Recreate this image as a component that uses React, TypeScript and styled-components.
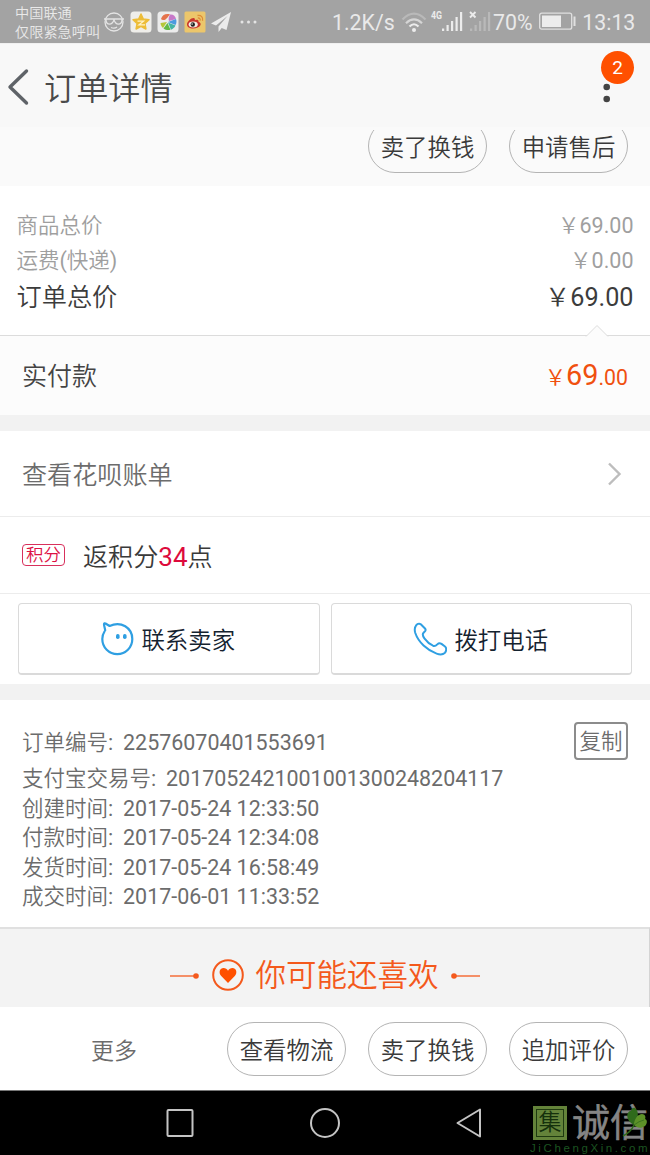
import React from 'react';
import styled, { createGlobalStyle } from 'styled-components';

const GlobalStyle = createGlobalStyle`
  * { box-sizing: border-box; }
  body {
    margin: 0;
    background: #fff;
    font-family: Roboto, "Noto Sans CJK SC DemiLight", "Noto Sans CJK SC", sans-serif;
    font-weight: 400;
    color: #444;
  }
  button { font-family: inherit; padding: 0; margin: 0; }
`;

const Screen = styled.div`
  width: 650px;
  height: 1155px;
  display: flex;
  flex-direction: column;
  overflow: hidden;
  background: #fff;
`;

const StatusBar = styled.div`
  height: 43px;
  flex: none;
  display: flex;
  justify-content: space-between;
  padding: 0 15px;
  background: #a3a3a3;
  color: #e9e9e9;
`;

const StatusGroup = styled.div<{ $gap?: number }>`
  display: flex;
  align-items: center;
  gap: ${(p) => p.$gap ?? 0}px;
  height: 43px;
`;

const Carrier = styled.div`
  display: flex;
  flex-direction: column;
  font-size: 14.2px;
  line-height: 19px;
  width: 88px;
  padding-top: 3px;
  white-space: nowrap;
`;

const StatusText = styled.span<{ $width: number }>`
  width: ${(p) => p.$width}px;
  padding-top: 2px;
  font-size: 21.3px;
  line-height: 24px;
  white-space: nowrap;
`;

const Header = styled.header`
  height: 84px;
  flex: none;
  display: flex;
  align-items: center;
  padding: 3px 16px 0 7px;
  background: #f8f8f8;
  border-top: 1px solid #f0f0f0;
`;

const Title = styled.h1`
  flex: 1;
  margin: 0 0 0 15px;
  padding-top: 3px;
  font-size: 32.2px;
  font-weight: 400;
  line-height: 40px;
  color: #4a4a4a;
`;

const MenuButton = styled.div`
  position: relative;
  width: 54px;
  height: 60px;
`;

const Badge = styled.span`
  position: absolute;
  top: -6px;
  right: 0;
  width: 33px;
  height: 33px;
  border-radius: 50%;
  background: #ff5000;
  color: #fff;
  font-size: 19px;
  line-height: 33px;
  text-align: center;
`;

const ActionStrip = styled.div`
  height: 59px;
  flex: none;
  background: #fafafa;
  padding-top: 3px;
`;

const ActionClip = styled.div`
  display: flex;
  justify-content: flex-end;
  align-items: flex-end;
  gap: 22px;
  height: 43px;
  padding-right: 22px;
  overflow: hidden;
`;

const Pill = styled.button`
  flex: none;
  width: 119px;
  height: 54px;
  padding-top: 4px;
  border: 1px solid #b4b4b4;
  border-radius: 27px;
  background: transparent;
  color: #3a3a3a;
  font-size: 23.4px;
  line-height: 28px;
  white-space: nowrap;
`;

const Summary = styled.section`
  height: 149px;
  flex: none;
  padding: 22px 16.5px 0;
`;

const SummaryRow = styled.div<{ $strong?: boolean }>`
  display: flex;
  justify-content: space-between;
  align-items: center;
  height: ${(p) => (p.$strong ? 39 : 35)}px;
  font-size: ${(p) => (p.$strong ? 25.2 : 21.5)}px;
  line-height: 35px;
  color: ${(p) => (p.$strong ? '#3c3c3c' : '#9f9f9f')};
`;

const Paid = styled.section`
  position: relative;
  height: 80px;
  flex: none;
  display: flex;
  justify-content: space-between;
  align-items: center;
  padding: 0 22px;
  border-top: 1px solid #dcdcdc;
  background: #fcfcfc;
  font-size: 25px;
  line-height: 34px;
`;

const PaidLabel = styled.span`
  padding-top: 3px;
`;

const Notch = styled.svg`
  position: absolute;
  top: -12px;
  left: 585px;
`;

const Price = styled.span`
  padding-top: 2px;
  color: #f0500f;
  font-size: 21.3px;
  line-height: 34px;
  white-space: nowrap;
`;

const PriceWhole = styled.span`
  font-size: 28.8px;
`;

const Gap = styled.div<{ $height: number }>`
  flex: none;
  height: ${(p) => p.$height}px;
  background: #f2f2f2;
`;

const ListRow = styled.section<{ $height: number; $color: string }>`
  flex: none;
  display: flex;
  align-items: center;
  height: ${(p) => p.$height}px;
  padding: 0 28px 0 22px;
  border-bottom: 1px solid #ececec;
  font-size: 25.1px;
  line-height: 34px;
  color: ${(p) => p.$color};
`;

const RowText = styled.span`
  flex: 1;
  padding-top: 4px;
`;

const PointsTag = styled.span`
  width: 43px;
  height: 22px;
  margin-right: 18px;
  border: 1px solid #d8305c;
  border-radius: 4px;
  color: #dd1144;
  font-size: 17.5px;
  line-height: 21px;
  text-align: center;
  white-space: nowrap;
`;

const Points = styled.b`
  color: #dd0a3c;
  font-weight: 400;
  font-size: 26px;
`;

const ContactRow = styled.section`
  flex: none;
  display: flex;
  gap: 11px;
  height: 90px;
  padding: 9px 18px 9px;
`;

const ContactButton = styled.button`
  flex: 1;
  display: flex;
  align-items: center;
  justify-content: center;
  gap: 7px;
  height: 72px;
  padding-right: 1px;
  border: 1px solid #dadada;
  border-bottom-width: 2px;
  border-radius: 4px;
  background: #fff;
  color: #14222f;
  font-size: 23.4px;
  line-height: 30px;
`;

const ContactLabel = styled.span`
  padding-top: 4px;
`;

const OrderInfo = styled.section`
  flex: none;
  height: 227px;
  padding: 20px 22px 0;
  font-size: 21.5px;
  color: #6c6c6c;
`;

const InfoLine = styled.div<{ $height: number }>`
  display: flex;
  align-items: center;
  justify-content: space-between;
  height: ${(p) => p.$height}px;
  padding-top: 1px;
  line-height: 29px;
  white-space: pre;
`;

const InfoValue = styled.span`
  margin-left: 4.5px;
  font-size: 21.45px;
`;

const CopyButton = styled.button`
  width: 54px;
  height: 38px;
  margin-top: -2px;
  padding-top: 2px;
  border: 2px solid #8c8c8c;
  border-radius: 4px;
  background: #fff;
  color: #6c6c6c;
  font-size: 21.5px;
  line-height: 30px;
`;

const Recommend = styled.section`
  flex: none;
  display: flex;
  align-items: center;
  justify-content: center;
  height: 80px;
  padding-top: 15px;
  border-top: 2px solid #e0e0e0;
  border-right: 1px solid #d4d4d4;
  background: #f3f3f3;
  color: #f4591c;
  font-size: 30.5px;
  line-height: 40px;
`;

const RecommendTitle = styled.span`
  margin: 0 11px 0 12px;
  padding-top: 1px;
`;

const HeartIcon = styled.svg`
  margin-left: 12px;
  margin-top: -2px;
`;

const Footer = styled.footer`
  flex: none;
  display: flex;
  align-items: center;
  gap: 22px;
  height: 83px;
  padding: 1px 22px 0 91px;
`;

const More = styled.span`
  flex: 1;
  color: #6c6c6c;
  font-size: 23px;
`;

const NavBar = styled.nav`
  flex: none;
  display: flex;
  align-items: center;
  height: 65px;
  padding-left: 166px;
  background: #000;
  border-top: 1px solid #777;
`;

const NavIcon = styled.svg<{ $after: number }>`
  flex: none;
  margin-right: ${(p) => p.$after}px;
`;

const Watermark = styled.div`
  flex: none;
  width: 120px;
  height: 64px;
  padding-top: 13px;
  overflow: hidden;
`;

const WatermarkTop = styled.div`
  position: relative;
  display: flex;
  align-items: center;
  height: 38px;
  padding-left: 3px;
  color: #858585;
  font-size: 38px;
  font-weight: 500;
  line-height: 38px;
  white-space: nowrap;
`;

const Seal = styled.span`
  flex: none;
  display: flex;
  align-items: center;
  justify-content: center;
  width: 34px;
  height: 34px;
  margin-right: 5px;
  background: #64833a;
  outline: 1.5px solid #1f3a10;
  outline-offset: -4px;
  color: #15300c;
  font-size: 23px;
  line-height: 24px;
`;

const WatermarkName = styled.span`
  -webkit-text-stroke: 0.7px #858585;
`;

const Leaf = styled.svg`
  position: absolute;
  left: 91px;
  top: 3px;
`;

const WatermarkUrl = styled.div`
  font-family: "Liberation Sans", sans-serif;
  font-size: 11.5px;
  line-height: 12px;
  letter-spacing: 2.6px;
  color: #1c5420;
  white-space: nowrap;
`;

const GlassesFace = () => (
  <svg width="22" height="22" viewBox="0 0 22 22" fill="none" stroke="#e4e4e4" strokeWidth="1.3">
    <circle cx="11" cy="11" r="9" />
    <path d="M1 8H21M3 8.200c0 3.500 1.300 5 3.600 5S10 11.500 11 9c1 2.500 2 4.200 4.300 4.200S19 11.500 19 8.200M8 16.500c2 .9 4.500.7 6-.5" />
  </svg>
);

const StarApp = () => (
  <svg width="22" height="22" viewBox="0 0 22 22">
    <rect x=".5" y=".5" width="21" height="21" rx="3.500" fill="#efeeea" />
    <path d="M11 3l2.300 5 5.700.7-4.100 3.800 1 5.500-4.900-2.700L6.100 18l1-5.500L3 8.700 8.700 8z" fill="#edbd38" stroke="#edbd38" strokeWidth="1.500" strokeLinejoin="round" />
    <path d="M7.500 10.200h6l-4.500 3.600h6" fill="none" stroke="#fff3c8" strokeWidth="1.300" />
  </svg>
);

const GalleryApp = () => (
  <svg width="22" height="22" viewBox="0 0 22 22">
    <rect x=".5" y=".5" width="21" height="21" rx="3.500" fill="#ececec" />
    <path d="M4 8C5 4 9 2 13 3.500c-2 2-3 4-4.500 5C7 9.500 5 9 4 8z" fill="#e5734c" />
    <path d="M13 3.500c3-.5 5.500 1.500 6 4.500l-7 2c-1-2 0-4.500 1-6.500z" fill="#c678c8" />
    <path d="M11 11l8-3c.8 2 .5 4.500-.5 6z" fill="#4b9be0" />
    <path d="M11 11.500l7.500 3c-1 2-2.500 3.500-4.500 4.200z" fill="#45b5a5" />
    <path d="M10.500 12l3 6.800c-2.500.7-5 .2-7-1.300z" fill="#62ba45" />
    <path d="M10 11l-4 6c-1.500-1.300-2.300-3-2.500-5z" fill="#b5c738" />
  </svg>
);

const WeiboApp = () => (
  <svg width="22" height="22" viewBox="0 0 22 22">
    <rect x=".5" y=".5" width="21" height="21" rx="1.500" fill="#ecc66b" />
    <path d="M3 13.500c0-3 4-6.500 6.500-6.500 1.500 0 1.500 1.500 1.300 2.200 2.200-.9 4.200-.5 3.700 1.600 4.500 1.500 1.800 6.700-5.500 6.700-3.500 0-6-1.600-6-4z" fill="#c8352c" />
    <ellipse cx="9.200" cy="13.400" rx="4.600" ry="3" fill="#f6ede3" />
    <circle cx="8.800" cy="13.500" r="2.200" fill="#222" />
    <circle cx="8.100" cy="13" r=".7" fill="#fff" />
    <path d="M13.500 4.500c3.500-.7 6 2 5 5.300M13.800 7c1.800-.2 2.800 1 2.300 2.600" fill="none" stroke="#df8c35" strokeWidth="1.300" />
  </svg>
);

const PaperPlane = () => (
  <svg width="21" height="20" viewBox="0 0 21 20" fill="#ececec">
    <path d="M20 0L0 11.500l5 2L16.500 4 7.500 14.500V20l3.200-4.100 4.800 2.100z" />
  </svg>
);

const StatusDots = () => (
  <svg width="20" height="4" viewBox="-3 0 20 4" fill="#e4e4e4">
    <circle cx="2" cy="2" r="1.500" />
    <circle cx="8.500" cy="2" r="1.500" />
    <circle cx="15" cy="2" r="1.500" />
  </svg>
);

const StatusIcons = () => (
  <svg width="92" height="24" viewBox="0 0 92 24">
    <g fill="none" strokeWidth="2.200">
      <path d="M1.500 9.500Q13 -2 24.500 9.500" stroke="#b9b9b9" />
      <path d="M5 13.200Q13 5.500 21 13.200" stroke="#d5d5d5" />
      <path d="M8.500 16.500Q13 12 17.500 16.500" stroke="#ececec" />
    </g>
    <circle cx="13" cy="20" r="2" fill="#ececec" />
    <text x="30" y="9" fontSize="10" fontWeight="700" fill="#ececec" textLength="11" lengthAdjust="spacingAndGlyphs">4G</text>
    <path d="M41 18.500h2.200v2.500h-2.200zM45.500 15h2.200v6h-2.200zM50 11h2.200v10h-2.200zM54.500 7h2.200v14h-2.200zM59 2h2.200v19h-2.200z" fill="#ececec" />
    <path d="M69 2l5.500 5.500M74.500 2l-5.500 5.500" stroke="#ececec" strokeWidth="1.900" />
    <path d="M69 18.500h2.200v2.500h-2.200zM73.500 15h2.200v6h-2.200zM78 11h2.200v10h-2.200zM82.500 7h2.200v14h-2.200zM87 2h2.200v19h-2.200z" fill="#b9b9b9" />
  </svg>
);

const BatteryIcon = () => (
  <svg width="38" height="19" viewBox="0 0 38 19">
    <rect x=".7" y="1.200" width="32" height="16" rx="2" fill="none" stroke="#e0e0e0" strokeWidth="1.300" />
    <rect x="3" y="3.500" width="19" height="11.500" fill="#ececec" />
    <path d="M35.500 4.500v9.500" stroke="#e0e0e0" strokeWidth="2" />
  </svg>
);

const SellerIcon = () => (
  <svg width="33" height="34" viewBox="0 0 33 34">
    <path d="M4.200 8.200C3.800 5.800 3 3.500 3 2.200c0-.9.7-1 1.500-.7L8.600 4C20 -1.500 31.300 6 31.300 17c0 8.500-6.700 15.200-15 15.200S1.300 25.500 1.300 17c0-3 .8-5.400 2.200-7.500" fill="none" stroke="#2f9fe2" strokeWidth="2.200" strokeLinecap="round" strokeLinejoin="round" />
    <rect x="15" y="12" width="3.600" height="5" rx="1.700" fill="#2f9fe2" />
    <rect x="22" y="12" width="3.600" height="5" rx="1.700" fill="#2f9fe2" />
  </svg>
);

const PhoneIcon = () => (
  <svg width="34" height="34" viewBox="0 0 34 34">
    <path d="M2.600 4.200C3.700 2 6 1 7.800 2.300L12 6.500C13.300 8 12.300 9.200 10.800 10.400C9.200 11.800 9.600 14 11.600 16.700C14 20 17 22.400 20 23.700C22 24.500 23.200 23.500 24.300 22.400C25.500 21.200 27 21 28.500 21.900L32 24.500C33.800 26 33.500 29.300 31.700 31C29.800 32.700 26.800 32.700 23.600 31.600C14.200 28.200 5.400 20.200 2.300 11C1.500 8.400 1.600 6 2.600 4.200Z" fill="none" stroke="#2f9fe2" strokeWidth="2" strokeLinejoin="round" />
  </svg>
);

const times = [
  ['创建时间', '2017-05-24 12:33:50'],
  ['付款时间', '2017-05-24 12:34:08'],
  ['发货时间', '2017-05-24 16:58:49'],
  ['成交时间', '2017-06-01 11:33:52'],
];

export default function App() {
  return (
    <Screen>
      <GlobalStyle />
      <StatusBar>
        <StatusGroup>
          <Carrier>
            <span>中国联通</span>
            <span>仅限紧急呼叫</span>
          </Carrier>
          <StatusGroup $gap={5}>
            <GlassesFace />
            <StarApp />
            <GalleryApp />
            <WeiboApp />
            <PaperPlane />
            <StatusDots />
          </StatusGroup>
        </StatusGroup>
        <StatusGroup>
          <StatusText $width={69}>1.2K/s</StatusText>
          <StatusIcons />
          <StatusText $width={46}>70%</StatusText>
          <BatteryIcon />
          <StatusText $width={58}>&nbsp;13:13</StatusText>
        </StatusGroup>
      </StatusBar>

      <Header>
        <svg width="22" height="38" viewBox="0 0 22 38">
          <path d="M19.500 3L3 19l16.500 16" fill="none" stroke="#5f6368" strokeWidth="3.400" strokeLinecap="round" strokeLinejoin="round" />
        </svg>
        <Title>订单详情</Title>
        <MenuButton>
          <svg width="54" height="60" viewBox="0 0 54 60" fill="#444">
            <circle cx="26.700" cy="30" r="3.300" />
            <circle cx="26.700" cy="42" r="3.300" />
          </svg>
          <Badge>2</Badge>
        </MenuButton>
      </Header>

      <ActionStrip>
        <ActionClip>
          <Pill>卖了换钱</Pill>
          <Pill>申请售后</Pill>
        </ActionClip>
      </ActionStrip>

      <Summary>
        <SummaryRow><span>商品总价</span><span>￥69.00</span></SummaryRow>
        <SummaryRow><span>运费(快递)</span><span>￥0.00</span></SummaryRow>
        <SummaryRow $strong><span>订单总价</span><span>￥69.00</span></SummaryRow>
      </Summary>

      <Paid>
        <Notch width="24" height="13" viewBox="0 0 24 13">
          <path d="M1 12.500L12 1.500l11 11" fill="#fcfcfc" stroke="#dcdcdc" />
        </Notch>
        <PaidLabel>实付款</PaidLabel>
        <Price>￥<PriceWhole>69</PriceWhole>.00</Price>
      </Paid>

      <Gap $height={16} />

      <ListRow $height={86} $color="#6c6c6c">
        <RowText>查看花呗账单</RowText>
        <svg width="15" height="26" viewBox="0 0 15 26">
          <path d="M2 2.500L12.500 13 2 23.500" fill="none" stroke="#bdbdbd" strokeWidth="2.400" />
        </svg>
      </ListRow>
      <ListRow $height={77} $color="#3a3a3a">
        <PointsTag>积分</PointsTag>
        <RowText>返积分<Points>34</Points>点</RowText>
      </ListRow>

      <ContactRow>
        <ContactButton><SellerIcon /><ContactLabel>联系卖家</ContactLabel></ContactButton>
        <ContactButton><PhoneIcon /><ContactLabel>拨打电话</ContactLabel></ContactButton>
      </ContactRow>

      <Gap $height={16} />

      <OrderInfo>
        <InfoLine $height={43}>
          <span>订单编号: <InfoValue>22576070401553691</InfoValue></span>
          <CopyButton>复制</CopyButton>
        </InfoLine>
        <InfoLine $height={30}>
          <span>支付宝交易号: <InfoValue>2017052421001001300248204117</InfoValue></span>
        </InfoLine>
        {times.map(([label, value]) => (
          <InfoLine key={label} $height={29.5}>
            <span>{label}: <InfoValue>{value}</InfoValue></span>
          </InfoLine>
        ))}
      </OrderInfo>

      <Recommend>
        <svg width="30" height="8" viewBox="0 0 30 8">
          <path d="M0 4h26" stroke="#f4591c" strokeWidth="1.300" />
          <circle cx="26" cy="4" r="2.800" fill="#f4591c" />
        </svg>
        <HeartIcon width="32" height="32" viewBox="0 0 32 32">
          <circle cx="16" cy="16" r="14.800" fill="none" stroke="#f4591c" strokeWidth="2" />
          <path d="M16 24L9 16.800C6.200 13.400 8 9 11.500 9c2 0 3.500 1 4.500 2.700C17 10 18.500 9 20.500 9c3.500 0 5.300 4.400 2.500 7.800z" fill="#ff5000" />
        </HeartIcon>
        <RecommendTitle>你可能还喜欢</RecommendTitle>
        <svg width="30" height="8" viewBox="0 0 30 8">
          <path d="M4 4h26" stroke="#f4591c" strokeWidth="1.300" />
          <circle cx="4" cy="4" r="2.800" fill="#f4591c" />
        </svg>
      </Recommend>

      <Footer>
        <More>更多</More>
        <Pill>查看物流</Pill>
        <Pill>卖了换钱</Pill>
        <Pill>追加评价</Pill>
      </Footer>

      <NavBar>
        <NavIcon $after={115} width="28" height="30" viewBox="0 0 28 30">
          <rect x="1.500" y="2" width="25" height="26" rx="1" fill="none" stroke="#c4c4c4" strokeWidth="2" />
        </NavIcon>
        <NavIcon $after={115} width="32" height="32" viewBox="0 0 32 32">
          <circle cx="16" cy="16" r="14" fill="none" stroke="#c4c4c4" strokeWidth="2" />
        </NavIcon>
        <NavIcon $after={48} width="26" height="30" viewBox="0 0 26 30">
          <path d="M24 1.500v27L1.500 15z" fill="none" stroke="#c4c4c4" strokeWidth="2" strokeLinejoin="round" />
        </NavIcon>
        <Watermark>
          <WatermarkTop>
            <Seal>集</Seal>
            <WatermarkName>诚信</WatermarkName>
            <Leaf width="28" height="32" viewBox="0 0 28 32">
              <path d="M13 18C7 15 5 9 7 6C8 4 9 4 10 4C10 2 12 0 14 1C18 4 18 11 13 18Z" fill="#2f6a1c" />
              <path d="M13 18C13 12 17 7 21 7C24 7 25 10 24 12C27 13 26 17 24 19C20 22 16 21 13 18Z" fill="#5d9128" />
              <path d="M13 18Q18 14 23 13" fill="none" stroke="#3b741f" strokeWidth="1" />
              <path d="M13 18Q10 25 2 29" fill="none" stroke="#2f6a1c" strokeWidth="1.500" />
            </Leaf>
          </WatermarkTop>
          <WatermarkUrl>JiChengXin.com</WatermarkUrl>
        </Watermark>
      </NavBar>
    </Screen>
  );
}
